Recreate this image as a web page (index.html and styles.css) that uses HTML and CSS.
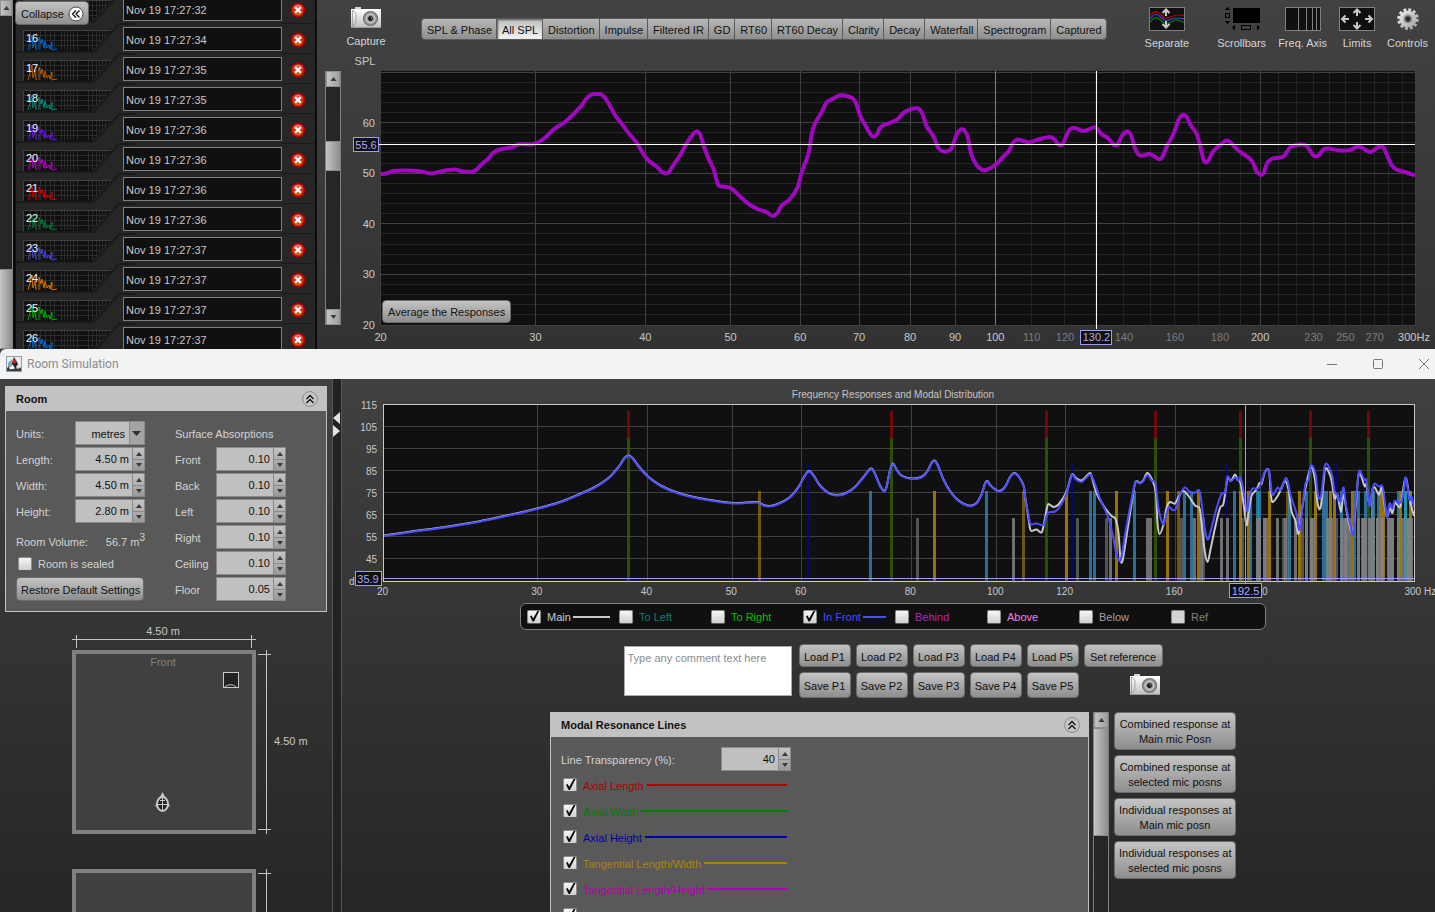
FILE: index.html
```html
<!DOCTYPE html>
<html lang="en">
<head>
<meta charset="utf-8">
<title>Room Simulation</title>
<link rel="stylesheet" href="styles.css">
</head>
<body>
<svg class="defs" width="0" height="0" aria-hidden="true">
  <defs>
    <linearGradient id="camBody" x1="0" y1="0" x2="0" y2="1"><stop offset="0" stop-color="#fff"/><stop offset="1" stop-color="#bdbdbd"/></linearGradient>
    <radialGradient id="camLens"><stop offset="0" stop-color="#111"/><stop offset=".25" stop-color="#333"/><stop offset=".35" stop-color="#999"/><stop offset=".6" stop-color="#aaa"/><stop offset="1" stop-color="#666"/></radialGradient>
    <linearGradient id="redDot" x1="0" y1="0" x2="0" y2="1"><stop offset="0" stop-color="#e89088"/><stop offset=".45" stop-color="#d03018"/><stop offset="1" stop-color="#d86a00"/></linearGradient>
    <linearGradient id="gearFill" x1="0" y1="0" x2="1" y2="1"><stop offset="0" stop-color="#f0f0f0"/><stop offset="1" stop-color="#a0a0a0"/></linearGradient>
  </defs>
  <symbol id="camera" viewBox="0 0 30 22">
    <rect x="4" y="0" width="6" height="3" fill="#d8d8d8"/>
    <rect x="0" y="2" width="30" height="19" fill="url(#camBody)"/>
    <path d="M1.500 3v17M1.500 20L5 15V6.500L2 3" fill="none" stroke="#999" stroke-width=".8"/>
    <path d="M0 20.500H30" stroke="#999"/>
    <circle cx="19.500" cy="11.500" r="7.600" fill="url(#camLens)"/>
    <circle cx="19.500" cy="11.500" r="4.500" fill="none" stroke="#d8d8d8" stroke-width=".8"/>
    <circle cx="19.500" cy="11.500" r="2.200" fill="#15151f"/>
    <circle cx="20.300" cy="11" r=".8" fill="#aab"/>
  </symbol>
  <symbol id="delete" viewBox="0 0 16 16">
    <circle cx="8" cy="8" r="7.400" fill="#b40000"/>
    <circle cx="8" cy="8" r="5.600" fill="url(#redDot)"/>
    <path d="M5.200 5.200L10.800 10.800M10.800 5.200L5.200 10.800" stroke="#fff" stroke-width="2.200"/>
  </symbol>
  <symbol id="chev-up" viewBox="0 0 16 16">
    <circle cx="8" cy="8" r="7.400" fill="#c6c6c6" stroke="#8c8c8c"/>
    <path d="M4.500 8L8 4.500L11.500 8M4.500 12L8 8.500L11.500 12" fill="none" stroke="#111" stroke-width="1.300"/>
  </symbol>
  <symbol id="up" viewBox="0 0 6 4"><path d="M0 4L3 0L6 4Z" fill="#3a3a3a"/></symbol>
  <symbol id="down" viewBox="0 0 6 4"><path d="M0 0L3 4L6 0Z" fill="#3a3a3a"/></symbol>
</svg>

<main class="window main-window">
  <aside class="scrollbar outer-scroll">
    <button type="button" aria-label="Scroll up"><svg width="7" height="4"><use href="#up"/></svg></button>
    <div class="track"><div class="space-outer"></div><div class="thumb thumb-outer"></div></div>
  </aside>
  <section class="measurements">
    <button type="button" class="collapse">Collapse
      <svg width="16" height="16" viewBox="0 0 16 16"><circle cx="8" cy="8" r="7" fill="#fff" stroke="#444"/><path d="M8 4.500L4.500 8L8 11.500M11.500 4.500L8 8L11.500 11.500" fill="none" stroke="#111" stroke-width="1.300"/></svg>
    </button>
    <ul class="rows" id="rows"></ul>
  </section>
  <aside class="scrollbar inner-scroll">
    <button type="button" aria-label="Scroll up"><svg width="7" height="4"><use href="#up"/></svg></button>
    <div class="track"><div class="space-a"></div><div class="thumb thumb-inner"></div><div class="space-b"></div></div>
    <button type="button" aria-label="Scroll down"><svg width="7" height="4"><use href="#down"/></svg></button>
  </aside>
  <section class="graph-pane">
    <header class="graph-head">
      <button type="button" class="tool capture"><svg width="30" height="22"><use href="#camera"/></svg>Capture</button>
      <nav class="tabs">
        <button type="button">SPL &amp; Phase</button><button type="button" class="active">All SPL</button><button type="button">Distortion</button><button type="button">Impulse</button><button type="button">Filtered IR</button><button type="button">GD</button><button type="button">RT60</button><button type="button">RT60 Decay</button><button type="button">Clarity</button><button type="button">Decay</button><button type="button">Waterfall</button><button type="button">Spectrogram</button><button type="button">Captured</button>
      </nav>
      <div class="tools">
        <button type="button" class="tool separate">
          <svg width="36" height="24" viewBox="0 0 36 24"><rect x=".5" y=".5" width="35" height="23" fill="#101010" stroke="#808080"/>
            <g fill="none" stroke-width="1.200"><path d="M1 8.500C6 3 8 4 12 8S18 12 23 9.500S30 8 35 8.500" stroke="#c00000"/><path d="M1 12C5 6 8 6.500 12 10.500S18 14 23 12S30 11 35 12" stroke="#3c46d8"/><path d="M1 15.500C5 9 8 9.500 12 13.500S18 17.500 23 14.500S30 13.500 35 15.500" stroke="#008000"/></g>
            <path d="M17 9V3M13.500 6L17 2.500L20.500 6M17 14V20M13.500 17L17 20.500L20.500 17" fill="none" stroke="#c8c8c8" stroke-width="2"/></svg>Separate</button>
        <button type="button" class="tool">
          <svg width="36" height="24" viewBox="0 0 36 24"><rect x="9" y="1" width="27" height="15"/><g fill="none" stroke="#000"><rect x="1.500" y="6.500" width="4" height="4"/><rect x="17.500" y="18.500" width="9" height="4"/></g><path d="M.5 3L3.500 0L6.500 3ZM.5 14H6.500L3.500 17ZM11 17.500V23.500L8 20.500ZM33 17.500V23.500L36 20.500Z"/></svg>Scrollbars</button>
        <button type="button" class="tool">
          <svg width="36" height="24" viewBox="0 0 36 24"><rect x=".5" y=".5" width="35" height="23" fill="#101010" stroke="#808080"/><path d="M13.500 0V24M21.500 0V24M27.500 0V24M31.500 0V24" stroke="#808080"/></svg>Freq. Axis</button>
        <button type="button" class="tool">
          <svg width="36" height="24" viewBox="0 0 36 24"><rect x=".5" y=".5" width="35" height="23" fill="#101010" stroke="#808080"/><path d="M18 9V3M14.500 6L18 2.500L21.500 6M18 15V21M14.500 18L18 21.500L21.500 18M10 12H3M6.500 8.500L3 12L6.500 15.500M26 12H33M29.500 8.500L33 12L29.500 15.500" fill="none" stroke="#c8c8c8" stroke-width="2"/></svg>Limits</button>
        <button type="button" class="tool">
          <svg width="24" height="24" viewBox="-12 -12 24 24"><circle r="9.300" fill="none" stroke="url(#gearFill)" stroke-width="3" stroke-dasharray="2.900 1.970"/><circle r="8.600" fill="url(#gearFill)"/><circle r="4.600" fill="#8c8c8c" stroke="#b8b8b8"/><circle r="2.800" fill="#2c2c2c" stroke="#666"/></svg>Controls</button>
      </div>
    </header>
    <div class="chart-box">
      <svg class="chart" id="splChart" role="img" aria-label="SPL"></svg>
      <button type="button" class="btn average">Average the Responses</button>
    </div>
  </section>
</main>

<div class="window sim-window">
  <header class="titlebar">
    <svg width="16" height="16" viewBox="0 0 16 16"><rect x=".5" y=".5" width="15" height="15" fill="#e4eef2" stroke="#8aa0ac"/><path d="M2 7L6 3L7 8L5 12H2Z" fill="#8aa2ac"/><path d="M1 12C4 9 11 9 15 12V15H1Z" fill="#3a3a3a"/><path d="M8 1L12 8L10 12L6 8Z" fill="#222"/><circle cx="8.500" cy="5.500" r="2" fill="#c81e1e"/><path d="M3 11L7 9.500L9 12.500L4 13.500Z" fill="#fff"/><path d="M10 10L13 9.500L14 12L11 13Z" fill="#ddd"/></svg>
    <h1>Room Simulation</h1>
    <div class="win-buttons">
      <button type="button" aria-label="Minimise"><svg width="12" height="12"><path d="M1 6.500H11" stroke="#777"/></svg></button>
      <button type="button" aria-label="Maximise"><svg width="12" height="12"><rect x="1.500" y="1.500" width="9" height="9" rx="1" fill="none" stroke="#777"/></svg></button>
      <button type="button" aria-label="Close"><svg width="12" height="12"><path d="M1 1L11 11M11 1L1 11" stroke="#777"/></svg></button>
    </div>
  </header>
  <div class="sim-body">
    <aside class="side">
      <section class="panel room">
        <header><h2>Room</h2><button type="button" aria-label="Collapse Room"><svg width="16" height="16"><use href="#chev-up"/></svg></button></header>
        <div class="room-grid">
          <div class="fields">
            <label for="units">Units:</label>
            <span class="select"><select id="units"><option>metres</option></select><svg width="9" height="5" viewBox="0 0 6 4" preserveAspectRatio="none"><path d="M0 0L3 4L6 0Z" fill="#333"/></svg></span>
            <label for="length">Length:</label><span class="spin" data-id="length" data-value="4.50 m"></span>
            <label for="width">Width:</label><span class="spin" data-id="width" data-value="4.50 m"></span>
            <label for="height">Height:</label><span class="spin" data-id="height" data-value="2.80 m"></span>
            <div class="volume"><span>Room Volume:</span><span>56.7 m<sup>3</sup></span></div>
            <label class="sealed"><input type="checkbox">Room is sealed</label>
            <button type="button" class="btn restore">Restore Default Settings</button>
          </div>
          <div class="fields absorb">
            <h3>Surface Absorptions</h3>
            <label for="front">Front</label><span class="spin" data-id="front" data-value="0.10"></span>
            <label for="back">Back</label><span class="spin" data-id="back" data-value="0.10"></span>
            <label for="left">Left</label><span class="spin" data-id="left" data-value="0.10"></span>
            <label for="right">Right</label><span class="spin" data-id="right" data-value="0.10"></span>
            <label for="ceiling">Ceiling</label><span class="spin" data-id="ceiling" data-value="0.10"></span>
            <label for="floor">Floor</label><span class="spin" data-id="floor" data-value="0.05"></span>
          </div>
        </div>
      </section>
      <svg class="plan" role="img" aria-label="Room plan">
        <g fill="#404040" stroke="#808080" stroke-width="4"><rect x="74" y="40" width="180" height="180"/><rect x="74" y="259" width="180" height="180"/></g>
        <path d="M72 27.500H256M76.500 23V36M251.500 23V36M266.500 38V222M258 42.500H271M258 217.500H271M266.500 257V440M258 261.500H271" stroke="#c4c4c4" fill="none"/>
        <g fill="#c8c8c8"><text x="163" y="23" text-anchor="middle">4.50 m</text><text x="274" y="133">4.50 m</text><text x="163" y="54" text-anchor="middle" fill="#808080">Front</text></g>
        <rect x="223.500" y="60.500" width="15" height="15" fill="#222" stroke="#c8c8c8"/>
        <path d="M225 75C227 72 234 72 236 75" fill="none" stroke="#c8c8c8"/>
        <path d="M159.500 186L162.500 180L165.500 186Z" fill="#c8c8c8"/><path d="M155 194L158 189V195ZM170 194L167 189V195Z" fill="#c8c8c8"/>
        <ellipse cx="162.500" cy="192" rx="5.500" ry="7" fill="#222" stroke="#c8c8c8" stroke-width="2"/>
        <path d="M162.500 186V198M158 192.500H167M160 188.500H165" stroke="#c8c8c8"/>
      </svg>
    </aside>
    <div class="divider"><svg width="8" height="26"><path d="M7 0V12L0 6ZM0 13V25L7 19Z" fill="#e4e4e4"/></svg></div>
    <section class="sim-main">
      <svg class="chart sim-chart" id="simChart" role="img" aria-label="Frequency Responses and Modal Distribution"></svg>
      <div class="lower">
        <div class="legend">
          <label class="main"><input type="checkbox" checked>Main<i></i></label>
          <label class="to-left"><input type="checkbox">To Left</label>
          <label class="to-right"><input type="checkbox">To Right</label>
          <label class="in-front"><input type="checkbox" checked>In Front<i></i></label>
          <label class="behind"><input type="checkbox">Behind</label>
          <label class="above"><input type="checkbox">Above</label>
          <label class="below"><input type="checkbox">Below</label>
          <label class="ref"><input type="checkbox" disabled>Ref</label>
        </div>
        <div class="presets">
          <textarea placeholder="Type any comment text here" aria-label="Comment"></textarea>
          <div class="preset-grid">
            <button type="button" class="btn">Load P1</button><button type="button" class="btn">Load P2</button><button type="button" class="btn">Load P3</button><button type="button" class="btn">Load P4</button><button type="button" class="btn">Load P5</button><button type="button" class="btn">Set reference</button>
            <button type="button" class="btn">Save P1</button><button type="button" class="btn">Save P2</button><button type="button" class="btn">Save P3</button><button type="button" class="btn">Save P4</button><button type="button" class="btn">Save P5</button>
            <button type="button" class="snap" aria-label="Capture"><svg width="30" height="22"><use href="#camera"/></svg></button>
          </div>
        </div>
        <div class="modal-row">
          <section class="panel modal">
            <header><h2>Modal Resonance Lines</h2><button type="button" aria-label="Collapse Modal Resonance Lines"><svg width="16" height="16"><use href="#chev-up"/></svg></button></header>
            <div class="modal-body">
              <div class="transparency"><label for="transparency">Line Transparency (%):</label><span class="spin" data-id="transparency" data-value="40"></span></div>
              <label class="line ax-l"><input type="checkbox" checked><span>Axial Length</span><i></i></label>
              <label class="line ax-w"><input type="checkbox" checked><span>Axial Width</span><i></i></label>
              <label class="line ax-h"><input type="checkbox" checked><span>Axial Height</span><i></i></label>
              <label class="line tan-lw"><input type="checkbox" checked><span>Tangential Length/Width</span><i></i></label>
              <label class="line tan-lh"><input type="checkbox" checked><span>Tangential Length/Height</span><i></i></label>
              <label class="line tan-wh"><input type="checkbox" checked aria-label="Tangential Width/Height"></label>
            </div>
          </section>
          <aside class="scrollbar modal-scroll">
            <button type="button" aria-label="Scroll up"><svg width="7" height="4"><use href="#up"/></svg></button>
            <div class="track"><div class="thumb thumb-modal"></div></div>
          </aside>
          <div class="responses">
            <button type="button" class="btn">Combined response at<br>Main mic Posn</button>
            <button type="button" class="btn">Combined response at<br>selected mic posns</button>
            <button type="button" class="btn">Individual responses at<br>Main mic posn</button>
            <button type="button" class="btn">Individual responses at<br>selected mic posns</button>
          </div>
        </div>
      </div>
    </section>
  </div>
</div>
<script src="app.js"></script>
</body>
</html>
```
FILE: styles.css
```css
* { box-sizing: border-box; }
html, body { height: 100%; }
body {
  margin: 0;
  display: grid;
  grid-template-rows: 349fr 563fr;
  overflow: hidden;
  background: #303030;
  color: #d4d4d4;
  font: 11px/14px "Liberation Sans", Arial, sans-serif;
}
button, input, select, textarea { font: inherit; color: #111; margin: 0; }
button { border: 0; padding: 0; background: none; cursor: pointer; }
h1, h2, h3, ul { margin: 0; padding: 0; font-size: inherit; font-weight: normal; list-style: none; }
.defs { position: absolute; }
.window { min-height: 0; overflow: hidden; }

.btn {
  min-height: 23px;
  padding: 2px 4px 0;
  border: 1px solid #6c6c6c;
  border-radius: 4px;
  background: linear-gradient(#c4c4c4, #8e8e8e);
  color: #101010;
  white-space: nowrap;
}

/* Scroll bars */
.scrollbar { display: flex; flex-direction: column; border: 1px solid #808080; border-width: 0 1px; background: #262626; }
.scrollbar button { display: grid; place-items: center; flex: 0 0 16px; border: 1px solid #909090; background: linear-gradient(90deg, #c4c4c4, #a0a0a0); }
.track { flex: 1; display: flex; flex-direction: column; min-height: 0; }
.thumb { background: linear-gradient(90deg, #c6c6c6, #8c8c8c); border: 1px solid #8c8c8c; border-width: 1px 0; }
.space-outer { flex: 255; }
.thumb-outer { flex: 78; }
.space-a { flex: 54; }
.thumb-inner { flex: 29; }
.space-b { flex: 139; }
.thumb-modal { height: 108px; }

/* Main window */
.main-window { display: grid; grid-template-columns: 13px 304px 24px minmax(0, 1fr); background: linear-gradient(#424242, #323232); }
.outer-scroll { border-left: 0; }
.inner-scroll { margin: 71px 0 24px 8px; }
.measurements { position: relative; overflow: hidden; background: #0c0c0c; padding: 0 2px 0 3px; }
.collapse {
  position: absolute; left: 2px; top: 1px; z-index: 1;
  display: flex; align-items: center; gap: 4px;
  height: 24px; padding: 2px 4px 0 5px;
  border: 1px solid #666; border-radius: 4px;
  background: linear-gradient(#c4c4c4, #8e8e8e);
}
.rows { margin-top: -7px; }
.row { display: grid; grid-template-columns: 107px 159px 1fr; height: 30px; background: #262626; }
.row > svg { width: 120px; height: 30px; }
.row svg text { fill: #f4f4f4; }
.row input {
  z-index: 1; height: 24px; width: 159px; margin-top: 4px; padding: 2px 2px 0;
  border: 1px solid #808080; border-radius: 0; background: #101010; color: #c8c8c8;
}
.row-end { display: grid; place-items: center start; padding: 2px 0 0 8px; border-top: 1px solid #1a1a1a; }
.row-end button { display: block; height: 16px; }

.graph-pane { display: flex; flex-direction: column; min-width: 0; }
.graph-head { display: flex; height: 49px; padding-right: 7px; }
.tool { display: flex; flex-direction: column; align-items: center; justify-content: space-between; height: 43px; margin-top: 7px; color: #d4d4d4; white-space: nowrap; }
.capture { width: 50px; height: 41px; }
.tabs { display: flex; height: 20px; margin: 19px 0 0 31px; border-radius: 3px; box-shadow: 0 0 0 1px #5c5c5c; }
.tabs button { padding: 1px 4px 0 5px; border-right: 1px solid #5a5a5a; background: linear-gradient(#b8b8b8, #8e8e8e); white-space: nowrap; }
.tabs button:last-child { border-right: 0; border-radius: 0 3px 3px 0; }
.tabs button:first-child { border-radius: 3px 0 0 3px; }
.tabs .active { background: linear-gradient(#bcbcbc, #f4f4f4); box-shadow: inset 1px 1px 2px #555; }
.tools { display: flex; gap: 12px; margin-left: auto; }
.separate { margin-right: 16px; }
.chart-box { position: relative; flex: 1; min-height: 0; }
.chart { display: block; width: 100%; height: 100%; font: 11px "Liberation Sans", Arial, sans-serif; }
.average { position: absolute; left: 41px; bottom: 26px; padding: 1px 5px 0; }

/* Simulation window */
.sim-window { display: flex; flex-direction: column; background: linear-gradient(#424242, #262626); }
.titlebar { display: flex; align-items: center; gap: 5px; flex: 0 0 30px; padding: 0 5px 0 6px; border-radius: 6px 0 0 0; background: #f3f3f3; }
.titlebar h1 { color: #8c8c8c; font: 12px/16px Roboto, sans-serif; }
.win-buttons { display: flex; gap: 34px; margin-left: auto; }
.win-buttons svg { display: block; }
.sim-body { flex: 1; min-height: 0; display: grid; grid-template-columns: 332px 10px minmax(0, 1fr); }
.side { display: flex; flex-direction: column; min-height: 0; overflow: hidden; }
.divider { padding-top: 33px; border: 1px solid #555; border-width: 0 1px; background: #222; }
.panel { border: 1px solid #c2c2c2; background: #595959; }
.panel header { display: flex; align-items: center; justify-content: space-between; height: 24px; padding: 0 8px 0 10px; background: #c2c2c2; }
.panel header button, .panel header svg { display: block; height: 16px; }
.panel h2 { color: #101010; font-weight: bold; }
.room { margin: 7px 5px 0; }
.room-grid { display: grid; grid-template-columns: 129px 111px; gap: 30px; padding: 10px; }
.fields { display: grid; grid-template-columns: 1fr 70px; grid-auto-rows: 24px; row-gap: 2px; align-items: center; align-content: start; }
.fields label { padding-top: 2px; }
.fields h3, .volume, .sealed, .restore { grid-column: 1 / -1; }
.volume { display: flex; justify-content: space-between; padding-top: 10px; }
sup { font-size: 10px; line-height: 0; vertical-align: 5px; }
.fields .sealed { display: flex; align-items: center; gap: 6px; padding: 2px 0 0 2px; }
.restore { height: 24px; margin-right: 1px; }
.room .fields h3 { padding-top: 2px; }
.spin, .select { position: relative; display: flex; width: 70px; height: 24px; border: 1px solid #8a8a8a; background: #c0c0c0; }
.spin input { flex: 1; min-width: 0; border: 0; padding: 0 3px 0 0; background: none; text-align: right; }
.spin-buttons { display: grid; grid-template-rows: 1fr 1fr; width: 12px; border-left: 1px solid #8a8a8a; background: linear-gradient(#c4c4c4, #9a9a9a); }
.spin-buttons button { display: grid; place-items: center; min-height: 0; }
.spin-buttons button + button { border-top: 1px solid #8a8a8a; }
.select select { width: 100%; padding: 2px 19px 0 0; appearance: none; border: 0; border-radius: 0; background: linear-gradient(90deg, transparent 53px, #8a8a8a 53px, #8a8a8a 54px, #a4a4a4 54px); text-align: right; text-align-last: right; }
.select svg { position: absolute; right: 3px; top: 9px; pointer-events: none; }
.plan { flex: 1; width: 100%; min-height: 0; }

input[type="checkbox"] {
  appearance: none; position: relative; flex: none; width: 14px; height: 14px;
  border: 1px solid #8c8c8c; border-bottom-color: #5c5c5c; border-radius: 2px;
  background: linear-gradient(#f6f6f6, #cfcfcf);
}
input[type="checkbox"]:checked::after {
  content: ""; position: absolute; inset: 0; background: #080808;
  clip-path: polygon(17% 48%, 30% 42%, 43% 66%, 80% 0, 96% 0, 50% 92%, 38% 92%);
}
input[type="checkbox"]:disabled { background: #d4d4d4; }

.sim-main { display: flex; flex-direction: column; min-width: 0; min-height: 0; overflow: hidden; }
.sim-chart { flex: 0 0 224px; font-size: 10px; }
.lower { flex: 1; min-height: 0; display: flex; flex-direction: column; align-items: center; padding-left: 9px; }
.legend { display: grid; grid-template-columns: repeat(8, 92px); padding: 0 2px 0 6px; height: 27px; border: 1px solid #808080; border-radius: 6px; background: #101010; }
.legend label { display: flex; align-items: center; gap: 6px; white-space: nowrap; }
.legend i { width: 37px; height: 2px; margin-left: -4px; background: currentColor; }
.main { color: #c8c8c8; }
.to-left { color: #008070; }
.to-right { color: #00c000; }
.in-front { color: #4c4cf4; }
.legend .in-front i { width: 23px; }
.behind { color: #b428b4; }
.above { color: #f080e0; }
.below { color: #a0a0a0; }
.ref { color: #808080; }
.presets { display: flex; gap: 7px; margin-top: 14px; }
.presets textarea { width: 168px; height: 50px; margin-top: 2px; padding: 4px 3px; border: 1px solid #aaa; border-radius: 0; background: #fff; resize: none; overflow: hidden; }
.presets textarea::placeholder { color: #8c8c8c; }
.preset-grid { display: grid; grid-template-columns: repeat(5, 52px) 79px; grid-template-rows: 23px 26px; gap: 5px; }
.snap { justify-self: end; align-self: center; margin-right: 3px; height: 22px; }
.modal-row { flex: 1; min-height: 0; display: grid; grid-template-columns: 539px 16px 123px; margin-top: 14px; column-gap: 4px; }
.modal { border-bottom: 0; min-height: 100%; overflow: hidden; }
.modal-body { display: flex; flex-direction: column; gap: 2px; padding: 10px; }
.transparency { display: flex; align-items: center; justify-content: space-between; width: 230px; }
.transparency label { padding-top: 2px; }
.line { display: flex; align-items: center; gap: 6px; flex: 0 0 24px; width: 226px; padding-left: 2px; white-space: nowrap; }
.line span { padding-top: 2px; }
.line i { flex: 1; height: 2px; margin-left: -3px; background: currentColor; }
.ax-l { color: #b00000; }
.ax-w { color: #008000; }
.ax-h { color: #0000b0; }
.tan-lw { color: #b08400; }
.tan-lh { color: #b000b0; }
.tan-wh { color: #00b4b4; }
.responses { display: flex; flex-direction: column; gap: 5px; margin-left: 1px; }
.responses .btn { height: 38px; line-height: 15px; }

/* Chart drawing */
.plot-bg { fill: #101010; }
.minor { stroke: #242424; }
.major { stroke: #404040; }
.bright { stroke: #808080; }
.tick { fill: #c8c8c8; }
.tick-dim { fill: #7c7c7c; }
.title { font-size: 10px; fill: #c4c4c4; }
.cursor { stroke: #fff; }
.cursor-blue { stroke: #9c9cf4; }
.readout rect { fill: #101010; stroke: #9c9cf4; }
.readout text { fill: #a8a8ff; font-size: 11px; }
.trace { fill: none; stroke-linejoin: round; }
.trace-spl { stroke: #a008c0; stroke-width: 4; }
.trace-main { stroke: #c8c8c8; stroke-width: 2; }
.trace-front { stroke: #4c4cff; stroke-width: 2; }
.frame { fill: none; stroke: #c8c8c8; }
.modes { fill-opacity: .6; }
```
FILE: app.js
```js
const NS = 'http://www.w3.org/2000/svg';

function add(parent, name, attrs, text) {
  const node = document.createElementNS(NS, name);
  for (const key in attrs) node.setAttribute(key, attrs[key]);
  if (text !== undefined) node.textContent = text;
  parent.appendChild(node);
  return node;
}

/* Measurement list; the first row's number sits behind the Collapse button */
const measurements = [
  ['', '32', '#0064c8'], [16, '34', '#0064d2'], [17, '35', '#b45a00'], [18, '35', '#008c78'],
  [19, '36', '#6414e6'], [20, '36', '#b400c8'], [21, '36', '#c80000'], [22, '36', '#007832'],
  [23, '37', '#4646d2'], [24, '37', '#dc6e00'], [25, '37', '#00aa00'], [26, '37', '#0064d2']
];
let grid = '';
for (const x of [14, 20, 24, 29, 34, 38, 45, 48, 51, 54, 57, 61, 72, 76, 80, 83, 86, 89]) grid += `M${x}.5 8V27`;
for (const y of [12, 17, 22]) grid += `M8 ${y}.5H90`;
document.getElementById('rows').innerHTML = measurements.map(([n, s, colour]) => `
  <li class="row">
    <svg viewBox="0 0 120 30"><path d="M120 1H103L78 29H0" fill="none" stroke="#1a1a1a" stroke-width="2"/>
      <clipPath id="thumb${n}"><path d="M7 7H95L76 28H7Z"/></clipPath>
      <g clip-path="url(#thumb${n})"><rect x="7" y="7" width="90" height="21" fill="#101010"/>
      <path d="${grid}" stroke="#2c2c2c"/><path d="M7.500 28V7.500H95" fill="none" stroke="#404040"/>
      <path d="M12 27L14 20L16 12L17 25L19 18L20 27M23 27V14L25 21L26 16L28 25L29 18L31 25L33 22L34 26L36 19V27L41 26" fill="none" stroke="${colour}"/></g>
      <text x="10" y="19">${n}</text></svg>
    <input value="Nov 19 17:27:${s}" aria-label="Measurement ${n}">
    <span class="row-end"><button type="button" aria-label="Remove ${n}"><svg width="16" height="16"><use href="#delete"/></svg></button></span>
  </li>`).join('');

/* Spinner fields */
document.querySelectorAll('.spin').forEach(el => {
  el.innerHTML = `<input id="${el.dataset.id}" value="${el.dataset.value}">
    <span class="spin-buttons"><button type="button" aria-label="Increase"><svg width="6" height="4"><use href="#up"/></svg></button><button type="button" aria-label="Decrease"><svg width="6" height="4"><use href="#down"/></svg></button></span>`;
});

/* Traces, in plot units */
const splTrace = [0,103,6,102.5,13,100,26,99.5,41,100.5,51,102.5,60,100.5,73.5,98.5,83,100.5,93,100.5,98,96.5,103,91.5,108,87.5,113,81.5,119.5,78.5,131,76.5,139.5,73,151,73.5,159.5,70.5,166,65.5,173,58.5,184.5,51,194.5,41.5,201,34.5,206,27.5,211,23.5,216,23,221,23.5,226,29,234.5,44,241,52.5,248,62,256,71.5,266,87.5,276,95.5,281,100.5,284.5,102.5,288,101.5,293,94,299.5,84.5,306,72.5,313,62.5,316,60.5,319.5,63,323,74,328,87.5,333,98,336,109,339,115,350,117,359.5,125.5,369.5,134,379.5,139,386,141,392,145,397,142,401,134.5,409,128.5,417,116.5,421,102,428,82.5,431,64,434.5,52.5,441,41.5,446,31.5,451,28.5,459,24.5,466,25,473,28,476,33.5,480,45.5,486,56.5,490.5,64,494,65.5,497,62.5,501,55.5,516,49,523.5,41.5,533,37.5,538,37.5,542,43,546,55,553,65.5,557,75.5,560.5,79.5,566,80.5,571,77.5,576,63.5,579.5,59,583.5,59,587,65,591,84,596,94,601,98.5,606,99,616,93,622,86.5,628,80.5,633,71.5,637,68.5,643,70,649,71.5,656,69,669.5,66,674.5,69,678,73.5,682,73.5,686,64.5,689.5,58.5,694.5,57,703,60,713,56.5,716,57,721,63,728,67.5,733,73.5,737,73.5,742,64,747,60.5,750.5,64,754.5,77.5,758.5,84,763,84.5,769.5,83,778,88,782,85.5,787,74,793,63,798,49,802,44,806,45.5,810,54,816,62.5,819.5,74,823,88.5,826,91.5,828.5,88.5,833,80,841,73,846,69.5,850,71.5,858,79.5,871,89.5,876,100.5,880,103.5,883,102.5,887,91.5,892,87.5,903,85.5,909.5,76.5,919.5,73.5,926,75,933,84.5,938,84.5,943,78.5,948,77.5,959.5,79.5,969.5,79,978.5,75.5,989.5,81,998,76,1003,76.5,1006,83,1011,94,1016,98.5,1026,101.5,1034.5,104.5];
const shared = [0,131.5,28,127.5,61.5,123,95,117.5,128,110.5,151.5,105,175,98.5,195,90.5,211.5,83,225,74,235,63,241,54,245,51.5,249,54,255,62,265,73,278,82,295,89,315,94,336.5,97.5,353,99,373,98,380,101,385,102,393,100.5,406.5,93,415,83,420.5,73,425.5,67,430.5,72,436.5,81.5,445,89,453,91,461.5,89.5,471.5,83,480,73,487.5,64.5,491.5,70,496.5,81.5,500.5,87,503,83,506.5,66.5,509.5,59.5,513,65.5,518,71.5,528,74.5,538,73,544,67,548,59,551,56.5,554,60.5,560,75.5,566.5,87,575,96.5,585,101.5,592.5,99.5,598,90.5,601.5,79.5,604,77,607,81.5,615,87,621.5,83,626.5,73,631,69,635.5,73,640,81.5,642,95.5];
const frontTrace = shared.concat([645,110.5,647,119.5,653,119,660,120.5,662.5,113,665,108,671.5,107,676.5,102,683,89,687,74.5,689,70,692.5,75,698,77.5,703,73,706.5,70,710,75.5,716.5,94,725,114,730,134,733,150.5,736,156.5,738,152,743,122,749,90.5,752,78,756.5,79,760,76.5,764,70.5,768,76,772,79.5,775,104,779,119,781,117,785,103,789,105.5,792.5,104,797.5,88,802,83,806.5,88,812,88,815,85.5,817,90.5,821,122,824,135,827.5,125.5,833,104,838,89.5,841.5,88,844,72,847.5,76.5,852,73,855,76,857,73,860.5,89,863.5,107,866,92,869,84,874,84.5,877.5,79,881.5,67,885,65.5,887,77,889,90.5,894,83,897.5,85.5,901.5,74.5,904,76,907.5,92,913,109,916,125.5,919,102,922,79,925,75.5,927.5,61,932,69,934.5,90.5,937.5,92,941,63,943.5,59.5,946,64,949,72,951,87,953,89,957,97,960,83,963,104,966.5,119,969.5,130,972,99,975.5,68,978,69.5,981,75.5,983,76.5,986,101.5,989,84,991.5,79,995,82,999,82,1001.5,99,1003.5,114,1006,99,1009,104,1011,96.5,1015,98,1018,97,1020.5,85.5,1022,73,1024,82,1026,95.5,1028,92,1030.5,103]);
const mainTrace = shared.concat([645,114,646.5,124.5,648,127,653,125.5,658,128.5,660,122,663.5,104,665,100,670,103,675,100.5,683,88,687,74,689,70,692.5,74,698,76.5,703,72,706.5,69,708,72,713,89,721.5,104,728,112,732,115,735,129,737,155.5,739,157,741.5,142,745,119,749,94,752,78,756.5,79,760,76,764,69,770,79,772.5,90.5,774,119,776,130,780,120.5,783,104,786.5,98,791.5,99.5,795.5,92,800,87,805,92,811.5,101.5,816,104,818,119,821,145.5,824,158,827,145.5,831.5,124,836.5,104,840,99.5,844,75,847.5,77,851.5,70.5,854,76,857,79,860,99,863,121,865,109,868,92,873,85.5,876,79,878,80,881.5,68,885.5,67,887.5,92,889.5,98,895,90.5,898,84,901.5,77,905,85.5,908,107,912,117,915,130,918,109,922,84,927.5,63,931.5,75.5,934,99,937,104,940,79,942,64,947.5,74,951,94,954,91,957.5,108,960,90.5,964,112,969,129,972.5,99,975.5,69,981,82,983,81,986,100.5,990,83,995.5,90.5,998.5,84,1003,112,1006.5,104,1009,109,1011.5,99,1017,102,1022,74,1026.5,97,1030.5,112]);

function smoothPath(data, ox, oy, sx, sy) {
  const p = [];
  for (let i = 0; i < data.length; i += 2) p.push([ox + data[i] * sx, oy + data[i + 1] * sy]);
  let d = `M${p[0]}`;
  for (let i = 0; i < p.length - 1; i++) {
    const a = p[Math.max(i - 1, 0)], b = p[i], c = p[i + 1], e = p[Math.min(i + 2, p.length - 1)];
    d += `C${b[0] + (c[0] - a[0]) / 6},${b[1] + (c[1] - a[1]) / 6} ${c[0] - (e[0] - b[0]) / 6},${c[1] - (e[1] - b[1]) / 6} ${c[0]},${c[1]}`;
  }
  return d;
}
const crisp = v => Math.floor(v) + 0.5;
const logPos = f => Math.log(f / 20) / Math.log(15);

function readout(svg, cx, cy, w, text) {
  const g = add(svg, 'g', { class: 'readout' });
  add(g, 'rect', { x: crisp(cx - w / 2), y: crisp(cy - 7), width: w, height: 14 });
  add(g, 'text', { x: cx, y: Math.round(cy) + 4, 'text-anchor': 'middle' }, text);
}

function drawSpl() {
  const svg = document.getElementById('splChart');
  svg.innerHTML = '';
  const box = svg.getBoundingClientRect();
  const L = 39.5, T = 22, W = box.width - L - 20, H = box.height - T - 24;
  const x = f => L + logPos(f) * W, y = db => T + (70.2 - db) / 50.2 * H;
  add(svg, 'rect', { class: 'plot-bg', x: L, y: T, width: W, height: H });
  const v = (f, c) => add(svg, 'path', { class: c, d: `M${crisp(x(f))} ${T}V${T + H}` });
  const h = (db, c) => add(svg, 'path', { class: c, d: `M${L} ${crisp(y(db))}H${L + W}` });
  for (let db = 22; db < 70; db += 2) if (db % 10) h(db, 'minor');
  for (let f = 110; f < 300; f += 10) v(f, 'minor');
  for (const db of [70, 60, 50, 40, 30, 20]) h(db, 'major');
  for (const f of [20, 30, 40, 50, 60, 70, 80, 90, 200, 300]) v(f, 'major');
  v(100, 'bright');
  add(svg, 'path', { class: 'trace trace-spl', d: smoothPath(splTrace, L, T, W / 1034.5, H / 254) });
  add(svg, 'path', { class: 'cursor', d: `M${L - 2} ${crisp(y(55.7))}H${L + W}M${crisp(x(130.4))} ${T}V${T + H + 4}` });
  add(svg, 'text', { class: 'tick', x: 24, y: 16, 'text-anchor': 'middle' }, 'SPL');
  for (const db of [60, 50, 40, 30, 20]) add(svg, 'text', { class: 'tick', x: 34, y: Math.round(y(db)) + 4, 'text-anchor': 'end' }, db);
  const bottom = T + H + 16;
  for (const f of [20, 30, 40, 50, 60, 70, 80, 90, 100, 200]) add(svg, 'text', { class: 'tick', x: x(f), y: bottom, 'text-anchor': 'middle' }, f);
  for (const f of [110, 120, 140, 160, 180, 230, 250, 270]) add(svg, 'text', { class: 'tick-dim', x: x(f), y: bottom, 'text-anchor': 'middle' }, f);
  add(svg, 'text', { class: 'tick', x: x(300) - 1, y: bottom, 'text-anchor': 'middle' }, '300Hz');
  readout(svg, 25, y(55.6), 25, '55.6');
  readout(svg, x(130.3), T + H + 12, 31, '130.2');
}

function drawSim() {
  const svg = document.getElementById('simChart');
  svg.innerHTML = '';
  const box = svg.getBoundingClientRect();
  const L = 41.5, T = 25.5, W = box.width - L - 20.5, H = 176;
  const x = f => L + logPos(f) * W, y = db => T + (115 - db) * 2.2;
  add(svg, 'rect', { class: 'plot-bg', x: L, y: T, width: W, height: H });
  for (let db = 105; db > 40; db -= 10) add(svg, 'path', { class: 'major', d: `M${L} ${crisp(y(db))}H${L + W}` });
  for (const f of [30, 40, 50, 60, 80, 100, 120, 160, 200]) add(svg, 'path', { class: 'major', d: `M${crisp(x(f))} ${T}V${T + H}` });

  /* Room modes below 300 Hz for a 4.5 x 4.5 x 2.8 m room */
  const groups = { l: [], w: [], h: [], lw: [], lh: [], wh: [], o: [] };
  const half = 171.3;
  for (let a = 0; a < 8; a++) for (let b = 0; b < 8; b++) for (let c = 0; c < 5; c++) {
    const f = half * Math.hypot(a / 4.5, b / 4.5, c / 2.8);
    if (f < 20 || f > 300) continue;
    const key = (a ? 'l' : '') + (b ? 'w' : '') + (c ? 'h' : '');
    groups[key.length === 3 ? 'o' : key].push(f);
  }
  const styles = { l: ['#b00000', 32], w: ['#008000', 59], h: ['#0000b0', 85], lw: ['#b08400', 112], lh: ['#b000b0', 112], wh: ['#00b4b4', 112], o: ['#808080', 139] };
  const modes = add(svg, 'g', { class: 'modes' });
  for (const key in styles) for (const f of groups[key])
    add(modes, 'rect', { x: Math.round(x(f)) - 2, y: styles[key][1], width: Math.min(3, L + W - x(f) + 2), height: T + H - styles[key][1], fill: styles[key][0] });

  add(svg, 'path', { class: 'trace trace-main', d: smoothPath(mainTrace, L, T - 0.5, W / 1031, 1) });
  add(svg, 'path', { class: 'trace trace-front', d: smoothPath(frontTrace, L, T, W / 1031, 1) });
  add(svg, 'rect', { class: 'frame', x: L, y: T, width: Math.floor(W), height: H + 1 });
  add(svg, 'path', { class: 'cursor-blue', d: `M${L - 2} ${T + H - 2}H${L + W}M${crisp(x(192.5))} ${T}V${T + H + 4}` });
  add(svg, 'text', { class: 'title', x: L + W / 2 - 6, y: 19, 'text-anchor': 'middle' }, 'Frequency Responses and Modal Distribution');
  for (let db = 115; db > 40; db -= 10) add(svg, 'text', { class: 'tick', x: 35, y: Math.round(y(db)) + 4, 'text-anchor': 'end' }, db);
  add(svg, 'text', { class: 'tick', x: 7, y: T + H + 4 }, 'dB');
  for (const f of [20, 30, 40, 50, 60, 80, 100, 120, 160, 200]) add(svg, 'text', { class: 'tick', x: x(f) - 1, y: T + H + 14, 'text-anchor': 'middle' }, f);
  add(svg, 'text', { class: 'tick', x: x(300) - 10, y: T + H + 14 }, '300 Hz');
  readout(svg, 26, T + H - 2, 26, '35.9');
  readout(svg, x(192.5), T + H + 10, 32, '192.5');
}

function draw() { drawSpl(); drawSim(); }
draw();
window.addEventListener('resize', draw);
```
